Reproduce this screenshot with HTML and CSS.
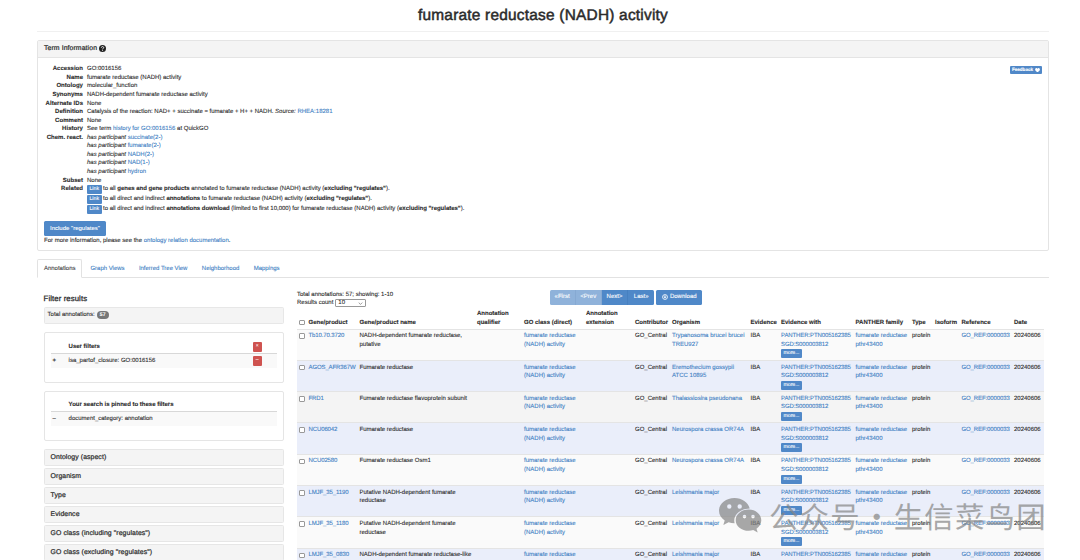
FILE: index.html
```html
<!DOCTYPE html>
<html lang="en">
<head>
<meta charset="utf-8">
<title>fumarate reductase (NADH) activity</title>
<link rel="stylesheet" href="styles.css">
</head>
<body>
<main class="page">
<h1 class="title"><span>fumarate reductase (NADH) activity</span></h1>
<section class="panel">
<header class="panel-head"><span>Term Information</span><svg class="help" viewBox="0 0 14 14"><circle cx="7" cy="7" r="7" fill="#222"/><path d="M4.7 5.3C4.7 2.4 9.4 2.5 9.4 5.1C9.4 6.9 7.1 6.7 7.1 8.6M7.1 9.7V11.5" fill="none" stroke="#fff" stroke-width="1.8"/></svg></header>
<div class="panel-body">
<dl class="info">
<dt>Accession</dt><dd>GO:0016156</dd>
<dt>Name</dt><dd>fumarate reductase (NADH) activity</dd>
<dt>Ontology</dt><dd>molecular_function</dd>
<dt>Synonyms</dt><dd>NADH-dependent fumarate reductase activity</dd>
<dt>Alternate IDs</dt><dd>None</dd>
<dt>Definition</dt><dd>Catalysis of the reaction: NAD+ + succinate = fumarate + H+ + NADH. <i>Source:</i> <a>RHEA:18281</a></dd>
<dt>Comment</dt><dd>None</dd>
<dt>History</dt><dd>See term <a>history for GO:0016156</a> at QuickGO</dd>
<dt>Chem. react.</dt><dd><i>has participant</i> <a>succinate(2-)</a><br><i>has participant</i> <a>fumarate(2-)</a><br><i>has participant</i> <a>NADH(2-)</a><br><i>has participant</i> <a>NAD(1-)</a><br><i>has participant</i> <a>hydron</a></dd>
<dt>Subset</dt><dd>None</dd>
<dt>Related</dt><dd class="related">
<div class="rel"><span class="link-btn">Link</span><span>to all <b>genes and gene products</b> annotated to fumarate reductase (NADH) activity (<b>excluding "regulates"</b>).</span></div>
<div class="rel"><span class="link-btn">Link</span><span>to all direct and indirect <b>annotations</b> to fumarate reductase (NADH) activity (<b>excluding "regulates"</b>).</span></div>
<div class="rel"><span class="link-btn">Link</span><span>to all direct and indirect <b>annotations download</b> (limited to first 10,000) for fumarate reductase (NADH) activity (<b>excluding "regulates"</b>).</span></div>
</dd>
</dl>
<span class="feedback">Feedback <svg viewBox="0 0 10 9"><path d="M5 9L.8 4.8C-1.2 2 2.5-1.6 5 1.3C7.5-1.6 11.2 2 9.2 4.8Z" fill="#fff"/></svg></span>
</div>
<div class="panel-foot"><button class="btn include">Include "regulates"</button><p>For more information, please see the <a>ontology relation documentation</a>.</p></div>
</section>
<nav class="tabs"><a class="tab active">Annotations</a><a class="tab">Graph Views</a><a class="tab">Inferred Tree View</a><a class="tab">Neighborhood</a><a class="tab">Mappings</a></nav>
<div class="columns">
<aside class="side">
<h2>Filter results</h2>
<div class="total">Total annotations: <span class="badge">57</span></div>
<div class="box user">
<div class="box-head"><span></span><b>User filters</b><span class="red">×</span></div>
<div class="box-row"><b>+</b><span>isa_partof_closure: GO:0016156</span><span class="red">–</span></div>
</div>
<div class="box pinned">
<div class="box-head"><span></span><b>Your search is pinned to these filters</b></div>
<div class="box-row"><span>–</span><span>document_category: annotation</span></div>
</div>
<div class="facets">
<div class="facet">Ontology (aspect)</div>
<div class="facet">Organism</div>
<div class="facet">Type</div>
<div class="facet">Evidence</div>
<div class="facet">GO class (including "regulates")</div>
<div class="facet">GO class (excluding "regulates")</div>
</div>
</aside>
<section class="results">
<div class="toolbar">
<div class="count"><div>Total annotations: 57; showing: 1-10</div><div class="per">Results count <span class="select">10<svg viewBox="0 0 8 5"><path d="M1 1L4 4L7 1" fill="none" stroke="#777" stroke-width="1.2"/></svg></span></div></div>
<div class="pager"><span class="btn off">«First</span><span class="btn off">&lt;Prev</span><span class="btn">Next&gt;</span><span class="btn">Last»</span></div>
<span class="btn download"><svg viewBox="0 0 14 14"><circle cx="7" cy="7" r="5.7" fill="none" stroke="#fff" stroke-width="1.9"/><path d="M6 3.2H8V6.5H10.4L7 10.3L3.6 6.5H6Z" fill="#fff"/></svg>Download</span>
</div>
<table class="grid">
<thead><tr><th><i class="check"></i></th><th>Gene/product</th><th>Gene/product name</th><th>Annotation<br>qualifier</th><th>GO class (direct)</th><th>Annotation<br>extension</th><th>Contributor</th><th>Organism</th><th>Evidence</th><th>Evidence with</th><th>PANTHER family</th><th>Type</th><th>Isoform</th><th>Reference</th><th>Date</th></tr></thead>
<tbody>
<tr><td><i class="check"></i></td><td><a>Tb10.70.3720</a></td><td>NADH-dependent fumarate reductase,<br>putative</td><td></td><td><a>fumarate reductase<br>(NADH) activity</a></td><td></td><td>GO_Central</td><td><a>Trypanosoma brucei brucei<br>TREU927</a></td><td>IBA</td><td><a>PANTHER:PTN005162385<br>SGD:S000003812</a><span class="more">more...</span></td><td><a>fumarate reductase<br>pthr43400</a></td><td>protein</td><td></td><td><a>GO_REF:0000033</a></td><td>20240606</td></tr>
<tr class="blue"><td><i class="check"></i></td><td><a>AGOS_AFR367W</a></td><td>Fumarate reductase</td><td></td><td><a>fumarate reductase<br>(NADH) activity</a></td><td></td><td>GO_Central</td><td><a>Eremothecium gossypii<br>ATCC 10895</a></td><td>IBA</td><td><a>PANTHER:PTN005162385<br>SGD:S000003812</a><span class="more">more...</span></td><td><a>fumarate reductase<br>pthr43400</a></td><td>protein</td><td></td><td><a>GO_REF:0000033</a></td><td>20240606</td></tr>
<tr class="gray"><td><i class="check"></i></td><td><a>FRD1</a></td><td>Fumarate reductase flavoprotein subunit</td><td></td><td><a>fumarate reductase<br>(NADH) activity</a></td><td></td><td>GO_Central</td><td><a>Thalassiosira pseudonana</a></td><td>IBA</td><td><a>PANTHER:PTN005162385<br>SGD:S000003812</a><span class="more">more...</span></td><td><a>fumarate reductase<br>pthr43400</a></td><td>protein</td><td></td><td><a>GO_REF:0000033</a></td><td>20240606</td></tr>
<tr class="blue"><td><i class="check"></i></td><td><a>NCU06042</a></td><td>Fumarate reductase</td><td></td><td><a>fumarate reductase<br>(NADH) activity</a></td><td></td><td>GO_Central</td><td><a>Neurospora crassa OR74A</a></td><td>IBA</td><td><a>PANTHER:PTN005162385<br>SGD:S000003812</a><span class="more">more...</span></td><td><a>fumarate reductase<br>pthr43400</a></td><td>protein</td><td></td><td><a>GO_REF:0000033</a></td><td>20240606</td></tr>
<tr><td><i class="check"></i></td><td><a>NCU02580</a></td><td>Fumarate reductase Osm1</td><td></td><td><a>fumarate reductase<br>(NADH) activity</a></td><td></td><td>GO_Central</td><td><a>Neurospora crassa OR74A</a></td><td>IBA</td><td><a>PANTHER:PTN005162385<br>SGD:S000003812</a><span class="more">more...</span></td><td><a>fumarate reductase<br>pthr43400</a></td><td>protein</td><td></td><td><a>GO_REF:0000033</a></td><td>20240606</td></tr>
<tr class="blue"><td><i class="check"></i></td><td><a>LMJF_35_1190</a></td><td>Putative NADH-dependent fumarate<br>reductase</td><td></td><td><a>fumarate reductase<br>(NADH) activity</a></td><td></td><td>GO_Central</td><td><a>Leishmania major</a></td><td>IBA</td><td><a>PANTHER:PTN005162385<br>SGD:S000003812</a><span class="more">more...</span></td><td><a>fumarate reductase<br>pthr43400</a></td><td>protein</td><td></td><td><a>GO_REF:0000033</a></td><td>20240606</td></tr>
<tr><td><i class="check"></i></td><td><a>LMJF_35_1180</a></td><td>Putative NADH-dependent fumarate<br>reductase</td><td></td><td><a>fumarate reductase<br>(NADH) activity</a></td><td></td><td>GO_Central</td><td><a>Leishmania major</a></td><td>IBA</td><td><a>PANTHER:PTN005162385<br>SGD:S000003812</a><span class="more">more...</span></td><td><a>fumarate reductase<br>pthr43400</a></td><td>protein</td><td></td><td><a>GO_REF:0000033</a></td><td>20240606</td></tr>
<tr class="blue"><td><i class="check"></i></td><td><a>LMJF_35_0830</a></td><td>NADH-dependent fumarate reductase-like</td><td></td><td><a>fumarate reductase</a></td><td></td><td>GO_Central</td><td><a>Leishmania major</a></td><td>IBA</td><td><a>PANTHER:PTN005162385</a></td><td><a>fumarate reductase</a></td><td>protein</td><td></td><td><a>GO_REF:0000033</a></td><td>20240606</td></tr>
</tbody>
</table>
</section>
</div>
</main>
<div class="watermark"><svg viewBox="0 0 43 35"><path fill-rule="evenodd" d="M15.5 0C7 0 0 5.6 0 12.7C0 16.7 2.3 20.2 5.7 22.5L4.3 27L9.6 24.3C11.4 24.9 13.4 25.2 15.6 25.2C13.6 17.5 20.4 10.6 30.7 10.4C29.3 4.4 22.8 0 15.5 0ZM10.3 6.3a2.2 2.2 0 1 1 0 4.4a2.2 2.2 0 0 1 0-4.4ZM20.7 6.3a2.2 2.2 0 1 1 0 4.4a2.2 2.2 0 0 1 0-4.4Z"/><path fill-rule="evenodd" d="M29.7 11.6C22.5 11.6 16.7 16.4 16.7 22.2C16.7 28.1 22.5 32.8 29.7 32.8C31.3 32.8 32.8 32.6 34.2 32.1L38.7 34.5L37.5 30.7C40.4 28.8 42.3 25.7 42.3 22.2C42.3 16.4 36.6 11.6 29.7 11.6ZM25.5 16.8a1.8 1.8 0 1 1 0 3.6a1.8 1.8 0 0 1 0-3.6ZM34 16.8a1.8 1.8 0 1 1 0 3.6a1.8 1.8 0 0 1 0-3.6Z"/></svg><span class="wm-name">公众号</span><span class="wm-dot">·</span><span class="wm-name">生信菜鸟团</span></div>
</body>
</html>
```
FILE: styles.css
```css
* { box-sizing: border-box; }
html, body { margin: 0; height: 560px; overflow: hidden; background: #fff; }
body { position: relative; font: 6px/8.57px "Liberation Sans", Arial, sans-serif; color: #2b2b2b; text-rendering: geometricPrecision; -webkit-text-stroke: .1px currentColor; }
a { color: #4080c4; }
.page { padding: 0 31px 0 37px; }
.title { margin: 0; height: 32px; padding-top: 6px; border-bottom: 1px solid #f0f0f0; font-size: 15.43px; line-height: 19px; font-weight: 400; letter-spacing: .22px; text-align: center; -webkit-text-stroke: .5px #2b2b2b; }
.panel { margin-top: 8px; height: 211px; border: 1px solid #e4e4e4; border-radius: 2px; }
.panel-head { height: 17px; display: flex; align-items: center; gap: 2px; padding-left: 6px; background: #f4f4f4; border-bottom: 1px solid #e4e4e4; font-size: 6.86px; letter-spacing: .1px; -webkit-text-stroke: .22px #2b2b2b; }
.help { width: 7px; height: 7px; margin-top: -1px; }
.panel-body { height: 162px; display: flex; justify-content: space-between; align-items: flex-start; padding: 7.3px 6px 0 0; }
.info { margin: 0; display: grid; grid-template-columns: 45px auto; column-gap: 4px; }
dt { font-weight: 700; text-align: right; white-space: nowrap; letter-spacing: .03px; }
dd { margin: 0; white-space: nowrap; }
.rel { height: 9.7px; display: flex; gap: 1.5px; }
.rel b { letter-spacing: -.02px; }
.link-btn { width: 14.5px; height: 9px; border-radius: 1px; background: #5088c8; color: #fff; font-size: 5.2px; line-height: 9px; text-align: center; }
.feedback { display: flex; align-items: center; justify-content: center; gap: 2px; width: 32px; height: 8px; margin-top: .7px; background: #5088c8; border-radius: 1px; color: #fff; font-size: 4.6px; font-weight: 700; }
.feedback svg { width: 5px; height: 4.5px; }
.panel-foot { padding-left: 6px; }
.panel-foot p { margin: 1px 0 0; }
.btn { height: 14.5px; display: flex; align-items: center; justify-content: center; border: 0; border-radius: 1.5px; background: #4f88c8; color: #fff; font: inherit; padding: 0; }
.include { width: 62px; margin-top: 1px; }
.tabs { margin-top: 8px; height: 19px; display: flex; border-bottom: 1px solid #e2e2e2; }
.tab { height: 18px; line-height: 20px; padding: 0 7.2px; letter-spacing: -.02px; }
.tab.active { height: 19px; padding: 0 6px; margin-right: .8px; border: 1px solid #e2e2e2; border-bottom-color: #fff; border-radius: 2px 2px 0 0; color: #444; line-height: 18px; }
.columns { display: flex; gap: 13px; }
.side { width: 247px; padding: 14px 0 0 6.6px; }
.side h2 { margin: 0; font-size: 7.7px; line-height: 13px; height: 14.5px; font-weight: 400; letter-spacing: .12px; -webkit-text-stroke: .28px #2b2b2b; }
.total { height: 17px; display: flex; align-items: center; gap: 2px; padding-left: 3px; border: 1px solid #e7e7e7; border-radius: 1.5px; background: #f4f4f4; }
.badge { width: 12px; height: 8px; border-radius: 4px; background: #777; color: #fff; font-size: 5.1px; font-weight: 700; line-height: 8px; text-align: center; }
.box { padding: 8px 6px 0; border: 1px solid #e5e5e5; border-radius: 2px; }
.user { margin-top: 8.5px; height: 51px; }
.pinned { margin-top: 8px; height: 49.5px; padding-top: 7px; }
.box-head, .box-row { display: grid; grid-template-columns: 18px 1fr 24px; height: 14px; align-items: center; }
.box-head { border-bottom: 1px solid #d8d8d8; height: 13px; }
.box-row { background: #f9f9f9; }
.box-row > :first-child { padding-left: 2px; }
.red { width: 8.5px; height: 9.5px; border-radius: 1px; background: #cf5350; color: #fff; font-size: 5px; line-height: 9px; text-align: center; }
.facets { margin-top: 8px; display: grid; gap: 2px; }
.facet { height: 17px; padding-left: 6px; border: 1px solid #e6e6e6; border-radius: 1.5px; background: #f4f4f4; font-size: 6.86px; line-height: 15.6px; letter-spacing: .09px; -webkit-text-stroke: .22px #2b2b2b; }
.results { width: 747px; }
.toolbar { height: 32px; display: flex; padding-top: 12px; }
.count { width: 252.5px; padding-top: .6px; line-height: 8.57px; }
.per { display: flex; gap: 2px; }
.select { width: 31px; height: 8px; line-height: 6px; display: flex; align-items: center; justify-content: space-between; padding: 0 2px; border: 1px solid #999; border-radius: 1px; }
.select svg { width: 5px; height: 3px; }
.pager { display: flex; }
.pager .btn { width: 26.2px; border-radius: 0; border-right: 1px solid #4780c0; }
.pager .off { background: #8fb2da; border-right-color: #86a9d2; }
.pager .btn:first-child { border-radius: 1.5px 0 0 1.5px; }
.pager .btn:last-child { border-radius: 0 1.5px 1.5px 0; border-right: 0; }
.download { width: 46px; margin-left: 2px; gap: 2px; }
.download svg { width: 6px; height: 6px; }
.grid, .grid thead, .grid tbody { display: block; }
.grid tr { display: grid; grid-template-columns: 9.5px 51px 117.5px 47px 62px 49px 37px 78.5px 30.5px 74.5px 56.5px 23px 26.5px 52.5px 31px; border-bottom: 1px solid #e4e4e4; }
.grid thead tr { height: 19.5px; align-items: end; }
.grid tbody tr { height: 31.3px; padding-top: 2.8px; background: #fafafa; }
.grid tbody .blue { background: #eaeefa; }
.grid tbody .gray { background: #f4f4f4; }
th, td { padding: 0 0 0 2px; text-align: left; white-space: nowrap; }
th { padding-bottom: 1.5px; }
td:nth-child(2), td:nth-child(10), td:nth-child(14) { letter-spacing: -.11px; }
.check { display: block; width: 5.6px; height: 5.6px; margin-top: 1.2px; border: 1px solid #999; border-radius: 1px; background: #fff; }
th .check { margin-bottom: 2px; }
.more { display: block; width: 21px; height: 9px; border-radius: 1px; background: #5088c8; color: #fff; font-size: 5.2px; line-height: 9px; letter-spacing: 0; text-align: center; }
.watermark { position: absolute; left: 719px; top: 498px; display: flex; opacity: .7; color: #858585; -webkit-text-stroke: 0; }
.watermark svg { width: 43px; height: 35px; margin-right: 7px; fill: #858585; }
.wm-name, .wm-dot { font: 400 29.4px/36px "Noto Sans CJK SC", sans-serif; letter-spacing: 1.2px; white-space: nowrap; }
.wm-dot { width: 33px; text-align: center; }
```
